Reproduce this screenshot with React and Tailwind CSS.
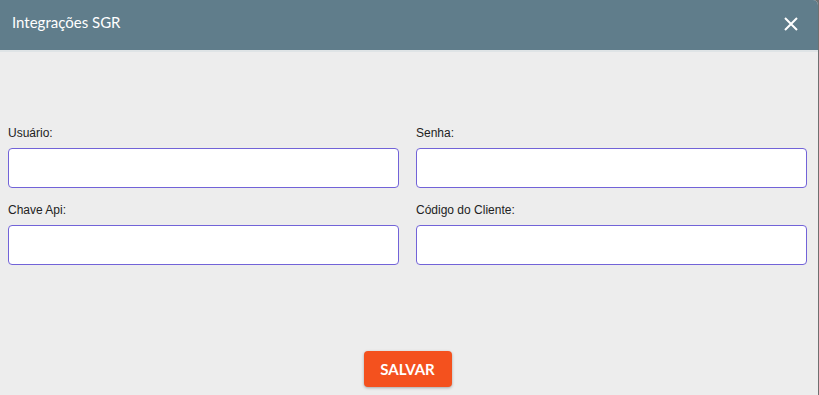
export default function App() {
  const fields = [
    ["Usuário:", "Senha:"],
    ["Chave Api:", "Código do Cliente:"],
  ];

  return (
    <div className="w-[819px] h-[395px] bg-[#707070] overflow-hidden">
      <div className="w-[818px] h-[395px] bg-[#ededed] rounded-tr-[5px] overflow-hidden flex flex-col">
        {/* HEADER */}
        <div className="h-[52px] shrink-0 bg-[#607d8b] border-b-2 border-[#dfe4e6] flex items-center justify-between pl-3 pr-5">
          <h2 className="text-[15px] text-white font-['Lato',sans-serif] -mt-[6px]">Integrações SGR</h2>
          <button className="w-[14px] h-[14px] -mt-[3px]">
            <svg viewBox="0 0 14 14" width="14" height="14">
              <path d="M1 1L13 13M13 1L1 13" stroke="white" strokeWidth="2" />
            </svg>
          </button>
        </div>

        {/* FORM */}
        <div className="flex-1 flex flex-col pt-[74px] pl-2 pr-[11px] font-['Liberation_Sans',Arial,sans-serif]">
          {fields.map((row, i) => (
            <div key={i} className={`grid grid-cols-2 gap-x-[17px] ${i > 0 ? "mt-[15px]" : ""}`}>
              {row.map((label) => (
                <div key={label} className="flex flex-col">
                  <label className="text-[12px] leading-[14px] text-[#222] mb-2">{label}</label>
                  <input
                    type="text"
                    className="h-10 bg-white border border-[#7263d8] rounded-[4px] px-2 outline-none"
                  />
                </div>
              ))}
            </div>
          ))}

          <div className="flex justify-center mt-[86px]">
            <button className="w-[88px] h-9 bg-[#f4511e] rounded-[4px] shadow-[0_1px_3px_rgba(0,0,0,0.3)] text-white text-[15px] font-bold font-['Lato',sans-serif]">
              SALVAR
            </button>
          </div>
        </div>
      </div>
    </div>
  );
}
